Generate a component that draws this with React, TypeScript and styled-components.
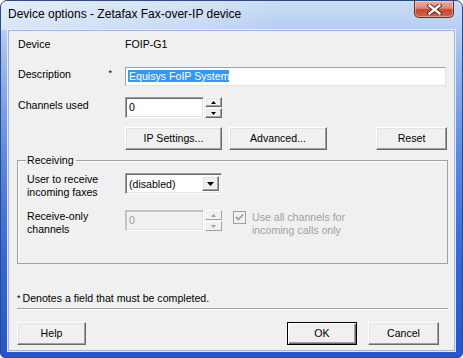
import React from 'react';
import styled, { createGlobalStyle, css } from 'styled-components';

const GlobalStyle = createGlobalStyle`
  html, body { margin: 0; padding: 0; background: #ffffff; }
  body {
    font-family: "Liberation Sans", Arial, sans-serif;
    font-size: 10.6px;
    color: #000;
  }
`;

const raised = css`
  box-sizing: border-box;
  background: #f0f0f0;
  border: 1px solid;
  border-color: #ffffff #696969 #696969 #ffffff;
  box-shadow: inset -1px -1px #a0a0a0, inset 1px 1px #e3e3e3;
`;

const sunken = css`
  box-sizing: border-box;
  border: 1px solid;
  border-color: #a0a0a0 #ffffff #ffffff #a0a0a0;
  box-shadow: inset 1px 1px #696969, inset -1px -1px #e3e3e3;
`;

const Window = styled.div`
  width: 463px;
  height: 358px;
  box-sizing: border-box;
  display: flex;
  flex-direction: column;
  border: 1px solid #2c4a86;
  border-radius: 7px 7px 5px 5px;
  overflow: hidden;
  background: linear-gradient(
    180deg,
    #cadcf6 0px,
    #b6cef1 28px,
    #93b3eb 70px,
    #5f8ae0 150px,
    #3a68d6 250px,
    #2555cb 357px
  );
`;

const TitleBar = styled.div`
  height: 29px;
  display: flex;
  justify-content: space-between;
  align-items: flex-start;
  padding-left: 7px;
  flex-shrink: 0;
  background: linear-gradient(100deg, rgba(255, 255, 255, 0.5) 0%, rgba(255, 255, 255, 0.2) 45%, rgba(255, 255, 255, 0) 60%);
`;

const Title = styled.div`
  font-size: 12px;
  line-height: 15px;
  padding-top: 6px;
  color: #000;
`;

const CloseButton = styled.div`
  width: 40px;
  height: 17px;
  margin-right: 8px;
  box-sizing: border-box;
  border: 1px solid #6b2a22;
  border-top: none;
  border-radius: 0 0 5px 5px;
  background: linear-gradient(180deg, #eab0a2 0%, #dc8a77 45%, #c5452f 55%, #d9654a 100%);
  box-shadow: inset 0 0 0 1px rgba(255, 255, 255, 0.35);
  display: flex;
  align-items: center;
  justify-content: center;
`;

const Content = styled.div`
  flex: 1;
  margin: 0 7px 6px 7px;
  background: #f0f0f0;
  border: 1px solid #9fb4da;
  box-shadow: 0 0 0 1px #e6eefa;
  display: flex;
  flex-direction: column;
  padding: 0 6px 0 8px;
`;

const Row = styled.div<{ $top: number; $height?: number }>`
  display: flex;
  align-items: flex-start;
  margin-top: ${(p) => p.$top}px;
  ${(p) => p.$height && `height: ${p.$height}px;`}
`;

const Label = styled.div<{ $width: number; $pad?: number }>`
  width: ${(p) => p.$width}px;
  flex-shrink: 0;
  padding-left: 1px;
  padding-top: ${(p) => p.$pad || 0}px;
  box-sizing: border-box;
  line-height: 13px;
  display: flex;
  justify-content: space-between;
`;

const Required = styled.span`
  font-size: 9px;
  line-height: 9px;
  margin-right: 13px;
  margin-top: 1px;
`;

const Value = styled.div`
  line-height: 16px;
`;

const TextInput = styled.div<{ $width: number }>`
  width: ${(p) => p.$width}px;
  height: 19px;
  box-sizing: border-box;
  border: 1px solid;
  border-color: #a0a0a0 #e3e3e3 #e3e3e3 #a0a0a0;
  background: #fff;
  padding: 2px 0 0 2px;
  line-height: 13px;
`;

const Selected = styled.span`
  background: #3399ff;
  color: #fff;
  padding: 0 0 0 1px;
`;

const SpinBox = styled.div<{ $disabled?: boolean }>`
  display: flex;
  width: 97px;
  height: 21px;
  color: ${(p) => (p.$disabled ? '#a0a0a0' : '#000')};
`;

const SpinEdit = styled.div<{ $disabled?: boolean }>`
  ${sunken};
  flex: 1;
  background: ${(p) => (p.$disabled ? '#f0f0f0' : '#fff')};
  ${(p) => p.$disabled && 'box-shadow: inset 1px 1px #c8c8c8, inset -1px -1px #e3e3e3; border-color: #c0c0c0 #fff #fff #c0c0c0;'}
  padding: 3px 0 0 3px;
  line-height: 13px;
`;

const SpinButtons = styled.div`
  width: 17px;
  display: flex;
  flex-direction: column;
  gap: 1px;
  margin-left: 1px;
`;

const SpinButton = styled.div<{ $disabled?: boolean }>`
  ${raised};
  flex: 1;
  display: flex;
  align-items: center;
  justify-content: center;
  ${(p) => p.$disabled && 'border-color: #fff #a0a0a0 #a0a0a0 #fff; box-shadow: none;'}
`;

const Button = styled.div<{ $width: number; $isDefault?: boolean }>`
  ${raised};
  width: ${(p) => p.$width}px;
  height: 23px;
  display: flex;
  align-items: center;
  justify-content: center;
  line-height: 13px;
  ${(p) =>
    p.$isDefault &&
    css`
      border-color: #000;
      box-shadow: inset 1px 1px #fff, inset -1px -1px #696969, inset -2px -2px #a0a0a0;
    `}
`;

const ButtonRow = styled.div<{ $top: number }>`
  display: flex;
  gap: 7px;
  margin-top: ${(p) => p.$top}px;
  padding-left: 108px;
  padding-right: 1px;
`;

const Spacer = styled.div`
  flex: 1;
`;

const Group = styled.fieldset`
  margin: 4px 0 0 0;
  height: 110px;
  box-sizing: border-box;
  border: 1px solid #a0a0a0;
  box-shadow: inset 1px 1px #fff;
  padding: 0 0 0 8px;
  min-width: 0;
`;

const Legend = styled.legend`
  padding: 0 2px 0 1px;
  line-height: 13px;
`;

const Combo = styled.div`
  ${sunken};
  width: 97px;
  height: 21px;
  background: #fff;
  display: flex;
  align-items: stretch;
  padding: 2px;
`;

const ComboText = styled.div`
  flex: 1;
  padding: 2px 0 0 1px;
  line-height: 13px;
`;

const ComboArrow = styled.div`
  ${raised};
  width: 17px;
  display: flex;
  align-items: center;
  justify-content: center;
`;

const CheckWrap = styled.div`
  display: flex;
  align-items: flex-start;
  margin-left: 11px;
  margin-top: 1px;
  gap: 6px;
  color: #a0a0a0;
  line-height: 13px;
`;

const CheckBox = styled.div`
  width: 13px;
  height: 13px;
  box-sizing: border-box;
  border: 1px solid #a0a0a0;
  background: #f0f0f0;
  display: flex;
  align-items: center;
  justify-content: center;
`;

const Note = styled.div`
  margin-top: 27px;
  line-height: 14px;
`;

const Star = styled.span`
  font-size: 9px;
  vertical-align: top;
  margin-right: 2px;
`;

const Separator = styled.div`
  margin-top: 3px;
  height: 1px;
  background: #a0a0a0;
  border-bottom: 1px solid #fff;
`;

const Footer = styled.div`
  display: flex;
  gap: 11px;
  margin-top: 12px;
  padding-right: 9px;
`;

const Arrow = ({ up, color = '#000', big }: { up?: boolean; color?: string; big?: boolean }) => {
  const w = big ? 7 : 5;
  const h = big ? 4 : 3;
  return (
    <svg width={w} height={h} viewBox={`0 0 ${w} ${h}`}>
      <polygon
        points={up ? `0,${h} ${w},${h} ${w / 2},0` : `0,0 ${w},0 ${w / 2},${h}`}
        fill={color}
      />
    </svg>
  );
};

const Spin = ({ value, disabled }: { value: string; disabled?: boolean }) => (
  <SpinBox $disabled={disabled}>
    <SpinEdit $disabled={disabled}>{value}</SpinEdit>
    <SpinButtons>
      <SpinButton $disabled={disabled}>
        <Arrow up color={disabled ? '#a0a0a0' : '#000'} />
      </SpinButton>
      <SpinButton $disabled={disabled}>
        <Arrow color={disabled ? '#a0a0a0' : '#000'} />
      </SpinButton>
    </SpinButtons>
  </SpinBox>
);

export default function App() {
  return (
    <>
      <GlobalStyle />
      <Window>
        <TitleBar>
          <Title>Device options - Zetafax Fax-over-IP device</Title>
          <CloseButton>
            <svg width="15" height="11" viewBox="0 0 15 11">
              <path d="M2.5 1.5 L12.5 9.5 M12.5 1.5 L2.5 9.5" stroke="#5a1c14" strokeWidth="4.2" strokeLinecap="square" />
              <path d="M2.5 1.5 L12.5 9.5 M12.5 1.5 L2.5 9.5" stroke="#fff" strokeWidth="2.4" strokeLinecap="square" />
            </svg>
          </CloseButton>
        </TitleBar>
        <Content>
          <Row $top={5} $height={16}>
            <Label $width={108} $pad={2}>Device</Label>
            <Value>FOIP-G1</Value>
          </Row>
          <Row $top={15}>
            <Label $width={108} $pad={1}>
              Description
              <Required>*</Required>
            </Label>
            <TextInput $width={321}>
              <Selected>Equisys FoIP System</Selected>
            </TextInput>
          </Row>
          <Row $top={11}>
            <Label $width={108} $pad={2}>Channels used</Label>
            <Spin value="0" />
          </Row>
          <ButtonRow $top={9}>
            <Button $width={97}>IP Settings...</Button>
            <Button $width={98}>Advanced...</Button>
            <Spacer />
            <Button $width={71}>Reset</Button>
          </ButtonRow>
          <Group>
            <Legend>Receiving</Legend>
            <Row $top={6}>
              <Label $width={99}>
                User to receive
                <br />
                incoming faxes
              </Label>
              <Combo>
                <ComboText>(disabled)</ComboText>
                <ComboArrow>
                  <Arrow big />
                </ComboArrow>
              </Combo>
            </Row>
            <Row $top={11}>
              <Label $width={99} $pad={0}>
                Receive-only
                <br />
                channels
              </Label>
              <Spin value="0" disabled />
              <CheckWrap>
                <CheckBox>
                  <svg width="9" height="9" viewBox="0 0 9 9">
                    <path d="M1 4 L3.5 6.5 L8 1.5" stroke="#a0a0a0" strokeWidth="1.8" fill="none" />
                  </svg>
                </CheckBox>
                <div>
                  Use all channels for
                  <br />
                  incoming calls only
                </div>
              </CheckWrap>
            </Row>
          </Group>
          <Note>
            <Star>*</Star>Denotes a field that must be completed.
          </Note>
          <Separator />
          <Footer>
            <Button $width={69}>Help</Button>
            <Spacer />
            <Button $width={70} $isDefault>
              OK
            </Button>
            <Button $width={71}>Cancel</Button>
          </Footer>
        </Content>
      </Window>
    </>
  );
}
